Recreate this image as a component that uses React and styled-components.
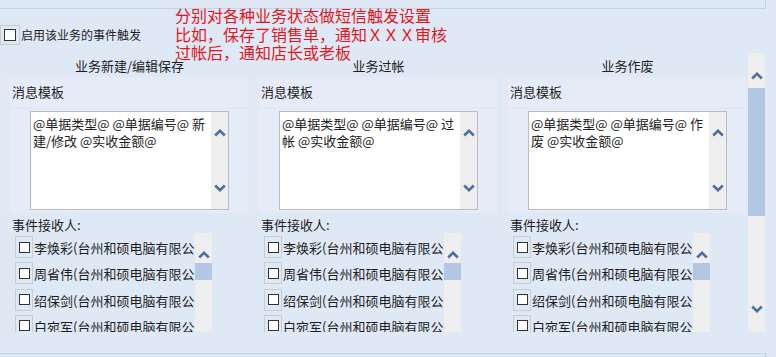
import React from 'react';
import styled, { createGlobalStyle } from 'styled-components';

const GlobalStyle = createGlobalStyle`
  html, body {
    margin: 0;
    padding: 0;
    background: #dfe8f5;
  }
  * {
    box-sizing: border-box;
  }
`;

const Page = styled.div`
  position: relative;
  width: 776px;
  height: 357px;
  overflow: hidden;
  background: #dfe8f5;
  color: #1e1e1e;
  font-family: 'Noto Sans CJK SC', 'Noto Sans', sans-serif;
  font-size: 13px;
`;

const TopPanel = styled.div`
  width: 766px;
  height: 9px;
  border-bottom: 1px solid #c6d3e6;
  border-right: 1px solid #c6d3e6;
`;

const OptionRow = styled.div`
  height: 44px;
  padding-top: 16px;
  display: flex;
  align-items: flex-start;
`;

const CheckFrame = styled.div`
  width: ${(p) => p.$w}px;
  height: ${(p) => p.$h}px;
  border: 1px solid #c9cdd3;
  display: flex;
  align-items: center;
  justify-content: center;
  flex-shrink: 0;
`;

const CheckBox = styled.div`
  width: ${(p) => p.$size}px;
  height: ${(p) => p.$size}px;
  border: 1px solid #333;
  background: #fff;
`;

const OptionLabel = styled.span`
  font-size: 12px;
  line-height: 20px;
  margin-left: 1px;
`;

const Note = styled.div`
  position: absolute;
  left: 175px;
  top: 6px;
  color: #e3161c;
  font-size: 16px;
  line-height: 18.5px;
`;

const Band = styled.div`
  display: flex;
  height: 279px;
`;

const Main = styled.div`
  width: 748px;
  display: flex;
  flex-direction: column;
`;

const HeaderRow = styled.div`
  height: 24px;
  display: grid;
  grid-template-columns: repeat(3, 245px);
  column-gap: 4px;
  padding-left: 3px;
`;

const Header = styled.div`
  text-align: center;
  padding-left: 8px;
  line-height: 26px;
`;

const Columns = styled.div`
  display: flex;
  gap: 4px;
  padding-left: 3px;
`;

const Column = styled.div`
  width: 245px;
  display: flex;
  flex-direction: column;
`;

const LabelRow = styled.div`
  height: 30px;
  line-height: 30px;
  background: #e6ecf7;
  border-left: 7px solid #e2e9f5;
  padding-left: 2px;
`;

const EditorRow = styled.div`
  margin-top: 2px;
  height: 104px;
  background: #e6ecf7;
  border-left: 7px solid #e2e9f5;
  padding: 2px 0 0 20px;
`;

const TextBox = styled.div`
  width: 199px;
  height: 99px;
  border: 1px solid #bcbcbc;
  background: #fff;
  display: flex;
`;

const TextContent = styled.div`
  flex: 1;
  padding: 3px 2px 0 2px;
  line-height: 17px;
  color: #222;
`;

const ScrollTrack = styled.div`
  width: 17px;
  background: #eeeeee;
  display: flex;
  flex-direction: column;
  align-items: center;
  justify-content: ${(p) => p.$justify || 'flex-start'};
  padding: ${(p) => p.$pad || '0'};
  flex-shrink: 0;
`;

const Thumb = styled.div`
  width: 17px;
  height: ${(p) => p.$h}px;
  margin-top: ${(p) => p.$top}px;
  background: #b3c7e3;
`;

const RecvLabel = styled.div`
  height: 20px;
  padding: 4px 0 0 9px;
  line-height: 16px;
`;

const ListBox = styled.div`
  margin-left: 12px;
  width: 197px;
  height: 99px;
  display: flex;
  overflow: hidden;
`;

const Items = styled.div`
  width: 180px;
  overflow: hidden;
`;

const Item = styled.div`
  height: 26.3px;
  padding-top: 3px;
  display: flex;
  align-items: flex-start;
  white-space: nowrap;
`;

const ItemText = styled.span`
  line-height: 24px;
  margin-left: 1px;
`;

const MainScroll = styled.div`
  width: 17px;
  height: 279px;
  background: #eeeeee;
  display: flex;
  flex-direction: column;
  align-items: center;
`;

const BottomLine = styled.div`
  margin-top: 21px;
  width: 766px;
  border-top: 1px solid #c6d3e6;
  border-right: 1px solid #c6d3e6;
  height: 4px;
`;

const Chevron = ({ down, style }) => (
  <svg width="12" height="8" viewBox="0 0 12 8" style={style}>
    <polyline
      points={down ? '1.2,1.5 6,6.2 10.8,1.5' : '1.2,6.5 6,1.8 10.8,6.5'}
      fill="none"
      stroke="#4a71a2"
      strokeWidth="2.6"
    />
  </svg>
);

const columns = [
  { title: '业务新建/编辑保存', text: '@单据类型@ @单据编号@ 新建/修改 @实收金额@' },
  { title: '业务过帐', text: '@单据类型@ @单据编号@ 过帐 @实收金额@' },
  { title: '业务作废', text: '@单据类型@ @单据编号@ 作废 @实收金额@' },
];

const people = ['李焕彩', '周省伟', '绍保剑', '白宛军'];

const App = () => {
  return (
    <Page>
      <GlobalStyle />
      <TopPanel />
      <OptionRow>
        <CheckFrame $w={20} $h={20}>
          <CheckBox $size={12} />
        </CheckFrame>
        <OptionLabel>启用该业务的事件触发</OptionLabel>
      </OptionRow>
      <Note>
        分别对各种业务状态做短信触发设置
        <br />
        比如，保存了销售单，通知ＸＸＸ审核
        <br />
        过帐后，通知店长或老板
      </Note>
      <Band>
        <Main>
          <HeaderRow>
            {columns.map((c) => (
              <Header key={c.title}>{c.title}</Header>
            ))}
          </HeaderRow>
          <Columns>
            {columns.map((c) => (
              <Column key={c.title}>
                <LabelRow>消息模板</LabelRow>
                <EditorRow>
                  <TextBox>
                    <TextContent>{c.text}</TextContent>
                    <ScrollTrack $justify="space-between" $pad="17px 0 17px">
                      <Chevron />
                      <Chevron down />
                    </ScrollTrack>
                  </TextBox>
                </EditorRow>
                <RecvLabel>事件接收人:</RecvLabel>
                <ListBox>
                  <Items>
                    {people.map((p) => (
                      <Item key={p}>
                        <CheckFrame $w={18} $h={22}>
                          <CheckBox $size={11} />
                        </CheckFrame>
                        <ItemText>{p}(台州和硕电脑有限公司)</ItemText>
                      </Item>
                    ))}
                  </Items>
                  <ScrollTrack>
                    <Chevron style={{ marginTop: 18 }} />
                    <Thumb $top={4} $h={17} />
                  </ScrollTrack>
                </ListBox>
              </Column>
            ))}
          </Columns>
        </Main>
        <MainScroll>
          <Chevron style={{ marginTop: 19 }} />
          <Thumb $top={8} $h={128} />
          <Chevron down style={{ marginTop: 89 }} />
        </MainScroll>
      </Band>
      <BottomLine />
    </Page>
  );
};

export default App;
